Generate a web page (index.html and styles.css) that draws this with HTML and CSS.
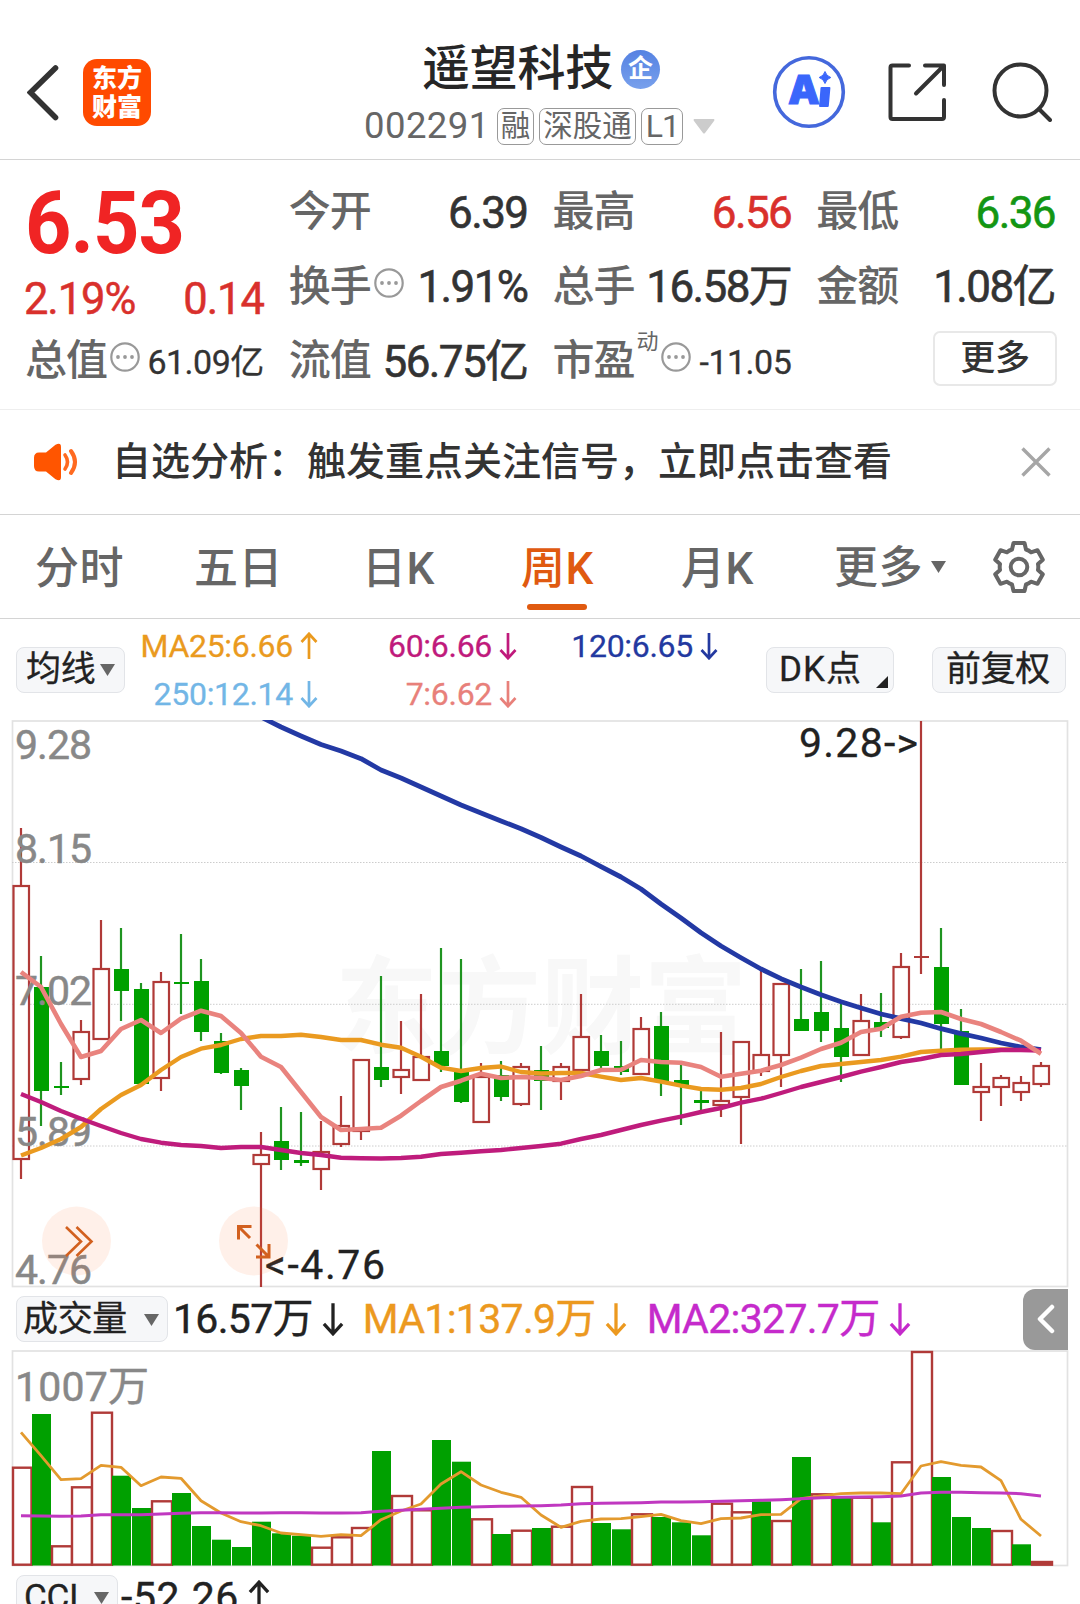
FILE: index.html
```html
<!DOCTYPE html>
<html lang="zh-CN">
<head>
<meta charset="utf-8">
<title>遥望科技 002291</title>
<link rel="stylesheet" href="styles.css">
</head>
<body>
<svg class="defs" width="0" height="0">
  <symbol id="more-dots" viewBox="0 0 30 30">
    <circle cx="15" cy="15" r="13.7" fill="none" stroke="#999" stroke-width="2.2"/>
    <circle cx="8" cy="15" r="1.9" fill="#999"/><circle cx="15" cy="15" r="1.9" fill="#999"/><circle cx="22" cy="15" r="1.9" fill="#999"/>
  </symbol>
  <symbol id="arrow-down" viewBox="0 0 18 28">
    <path d="M9 1V26M1.5 18L9 26.2L16.5 18" fill="none" stroke="currentColor" stroke-width="2.7"/>
  </symbol>
  <symbol id="arrow-up" viewBox="0 0 18 28">
    <path d="M9 27V2M1.5 10L9 1.8L16.5 10" fill="none" stroke="currentColor" stroke-width="2.7"/>
  </symbol>
  <symbol id="caret" viewBox="0 0 15 12"><path d="M0 0H15L7.5 12Z" fill="currentColor"/></symbol>
</svg>

<header class="header">
  <div class="header-left">
    <svg class="back" width="32" height="56" viewBox="0 0 32 56"><path d="M28.5 3L3.5 27.5L28.5 52.5" fill="none" stroke="#333" stroke-width="5.6" stroke-linecap="round" stroke-linejoin="miter"/></svg>
    <div class="logo"><span>东方</span><span>财富</span></div>
  </div>
  <div class="header-mid">
    <div class="title"><h1>遥望科技</h1><span class="ent">企</span></div>
    <div class="code"><span class="num">002291</span><span class="tag">融</span><span class="tag">深股通</span><span class="tag tag-l">L1</span><svg class="code-caret" width="22" height="15" viewBox="0 0 22 15"><path d="M1 0H21Q22 1 21 2L12 14Q11 15 10 14L1 2Q0 1 1 0Z" fill="#ccc"/></svg></div>
  </div>
  <div class="header-right">
    <svg width="74" height="74" viewBox="0 0 74 74">
      <circle cx="37" cy="37" r="34.3" fill="#fff" stroke="#4468dc" stroke-width="3.6"/>
      <text class="ai-a" x="16" y="49">A</text>
      <path d="M49.500 32H57.500Q58.500 32 58.400 33L56.800 51Q56.700 52 55.700 52H48Q47 52 47.100 51L48.500 33Q48.600 32 49.500 32Z" fill="#3a66fb"/>
      <path d="M53 16.500Q54.300 21 58.800 22.500Q54.300 24 53 28.500Q51.700 24 47.200 22.500Q51.700 21 53 16.500Z" fill="#3a66fb" stroke="#3a66fb"/>
    </svg>
    <svg class="share" width="60" height="60" viewBox="0 0 60 60" fill="none" stroke="#333" stroke-width="4" stroke-linecap="round" stroke-linejoin="round">
      <path d="M22 3.5H5.5Q3.5 3.5 3.5 5.5V55Q3.5 57 5.5 57H55Q57 57 57 55V38M38 3.5H57V23M56 4.500L29 31.500"/>
    </svg>
    <svg class="search" width="60" height="60" viewBox="0 0 60 60" fill="none" stroke="#333" stroke-width="4" stroke-linecap="round">
      <circle cx="28.500" cy="28.500" r="26"/><path d="M47 47L58 58"/>
    </svg>
  </div>
</header>

<section class="quote">
  <div class="price-block">
    <div class="price"><span>6.53</span></div>
    <div class="change"><span>2.19%</span><span>0.14</span></div>
  </div>
  <div class="cell"><label>今开</label><b>6.39</b></div>
  <div class="cell"><label>最高</label><b class="up">6.56</b></div>
  <div class="cell"><label>最低</label><b class="down">6.36</b></div>
  <div class="cell"><label>换手</label><svg class="dots"><use href="#more-dots"/></svg><b>1.91%</b></div>
  <div class="cell"><label>总手</label><b>16.58万</b></div>
  <div class="cell"><label>金额</label><b>1.08亿</b></div>
  <div class="cell"><label>总值</label><svg class="dots"><use href="#more-dots"/></svg><b class="small">61.09亿</b></div>
  <div class="cell"><label>流值</label><b>56.75亿</b></div>
  <div class="cell"><label>市盈</label><sup>动</sup><svg class="dots"><use href="#more-dots"/></svg><b class="small">-11.05</b></div>
  <div class="cell cell-more"><button class="more">更多</button></div>
</section>

<section class="notice">
  <svg class="speaker" width="46" height="38" viewBox="0 0 46 38">
    <path d="M6 9.500H13L22.500 1.800Q28 -1 28 4V34Q28 39 22.500 36.200L13 28.500H6Q1 28.500 1 23V15Q1 9.500 6 9.500Z" fill="#ff5500"/>
    <path d="M32 12Q37 19 32 26" fill="none" stroke="#ff6a20" stroke-width="3.600" stroke-linecap="round"/>
    <path d="M38 8Q46 19 38 30" fill="none" stroke="#ff6a20" stroke-width="4" stroke-linecap="round"/>
  </svg>
  <p>自选分析：触发重点关注信号，立即点击查看</p>
  <svg class="close" width="30" height="30" viewBox="0 0 30 30"><path d="M1.500 1.500L28.500 28.500M28.500 1.500L1.500 28.500" stroke="#a6a6a6" stroke-width="3.400"/></svg>
</section>

<nav class="tabs">
  <a>分时</a><a>五日</a><a>日K</a><a class="active">周K</a><a>月K</a>
  <a class="tab-more"><span>更多</span><svg width="15" height="12"><use href="#caret"/></svg></a>
  <svg class="gear" width="54" height="54" viewBox="-27 -27 54 54" fill="none" stroke="#666" stroke-width="4" stroke-linejoin="round">
    <path d="M-5.500 -24H5.500L7 -17.500Q10 -16.500 12 -14.700L18.500 -16.800L23.800 -7.300L19 -3Q19.600 0 19 3L23.800 7.300L18.500 16.800L12 14.700Q10 16.500 7 17.500L5.500 24H-5.500L-7 17.500Q-10 16.500 -12 14.700L-18.500 16.800L-23.800 7.300L-19 3Q-19.600 0 -19 -3L-23.800 -7.300L-18.500 -16.800L-12 -14.700Q-10 -16.500 -7 -17.500Z"/>
    <circle r="8.300"/>
  </svg>
</nav>

<section class="ma-bar">
  <button class="chip chip-ma">均线<svg width="15" height="12"><use href="#caret"/></svg></button>
  <div class="ma-col ma-1">
    <span class="c25">MA25:6.66<svg><use href="#arrow-up"/></svg></span>
    <span class="c250">250:12.14<svg><use href="#arrow-down"/></svg></span>
  </div>
  <div class="ma-col ma-2">
    <span class="c60">60:6.66<svg><use href="#arrow-down"/></svg></span>
    <span class="c7">7:6.62<svg><use href="#arrow-down"/></svg></span>
  </div>
  <div class="ma-col ma-3">
    <span class="c120">120:6.65<svg><use href="#arrow-down"/></svg></span>
  </div>
  <button class="chip chip-dk">DK点<svg width="12" height="12" viewBox="0 0 12 12"><path d="M12 0V12H0Z" fill="#222"/></svg></button>
  <button class="chip chip-adj">前复权</button>
</section>

<svg class="kline" id="kline" width="1080" height="568" viewBox="0 720 1080 568"></svg>

<section class="vol-bar">
  <button class="chip chip-vol">成交量<svg width="15" height="12"><use href="#caret"/></svg></button>
  <span class="v1">16.57万<svg><use href="#arrow-down"/></svg></span>
  <span class="v2">MA1:137.9万<svg><use href="#arrow-down"/></svg></span>
  <span class="v3">MA2:327.7万<svg><use href="#arrow-down"/></svg></span>
  <div class="drawer"><svg width="18" height="30" viewBox="0 0 18 30"><path d="M15 3L3 15L15 27" fill="none" stroke="#fff" stroke-width="4.500" stroke-linecap="round" stroke-linejoin="round"/></svg></div>
</section>

<svg class="volume" id="volume" width="1080" height="217" viewBox="0 -1 1080 217"></svg>

<section class="cci-bar">
  <button class="chip chip-cci">CCI<svg width="15" height="12"><use href="#caret"/></svg></button>
  <span class="v1">-52.26<svg><use href="#arrow-up"/></svg></span>
</section>
<script src="chart.js"></script>
</body>
</html>
```
FILE: styles.css
```css
* { box-sizing: border-box; }
body {
  margin: 0;
  width: 1080px;
  height: 1604px;
  overflow: hidden;
  background: #fff;
  color: #333;
  font-family: Roboto, "Noto Sans CJK SC", sans-serif;
  font-weight: 500;
  line-height: 1.2;
  letter-spacing: -.02em;
}
svg { display: block; flex: none; }
.defs { position: absolute; }
button { font: inherit; letter-spacing: inherit; color: #222; margin: 0; white-space: nowrap; }

.header {
  height: 160px;
  padding: 0 28px 0 27px;
  border-bottom: 1px solid #d4d4d4;
  display: grid;
  grid-template-columns: 1fr auto 1fr;
}
.header-left { display: flex; padding-top: 59px; gap: 24px; }
.back { margin-top: 6px; }
.logo {
  width: 68px;
  height: 67px;
  border-radius: 14px;
  background: #ff4a00;
  color: #fff;
  font-size: 25px;
  font-weight: 900;
  line-height: 29px;
  letter-spacing: 0;
  display: flex;
  flex-direction: column;
  align-items: center;
  justify-content: center;
}
.header-mid { display: flex; flex-direction: column; align-items: center; padding-top: 42px; }
.title { display: flex; align-items: center; gap: 8px; height: 54px; padding-left: 3px; }
h1 { margin: 0; font-size: 48px; font-weight: 500; line-height: 54px; color: #262626; letter-spacing: -.3px; }
.ent {
  width: 39px;
  height: 39px;
  border-radius: 50%;
  background: linear-gradient(#5582e2, #78a0ec);
  color: #fff;
  font-size: 25px;
  font-weight: 700;
  line-height: 38px;
  text-align: center;
}
.code { display: flex; align-items: center; height: 60px; color: #666; font-size: 36.5px; font-weight: 400; }
.code .num { margin-right: 7px; letter-spacing: .45px; }
.tag {
  height: 37px;
  padding: 0 3px;
  margin-right: 5px;
  border: 1.500px solid #999;
  border-radius: 7px;
  font-size: 29.5px;
  line-height: 34px;
  letter-spacing: 0;
}
.tag-l { padding: 0 3px 0 4px; font-size: 32px; letter-spacing: -1px; }
.code-caret { margin-left: 5px; }
.header-right { display: flex; justify-content: flex-end; padding-top: 55px; }
.share { margin: 7px 0 0 41px; }
.search { margin: 7px 0 0 45px; }
.ai-a { font: 900 40px Inter, sans-serif; fill: #3a66fb; stroke: #3a66fb; }

.quote {
  height: 250px;
  padding: 14px 25px 0;
  border-bottom: 1px solid #eee;
  display: grid;
  grid-template-columns: repeat(4, 1fr);
  grid-template-rows: repeat(3, 74.500px);
  column-gap: 25px;
}
.price-block { grid-row: span 2; color: #d9302c; }
.price { height: 92px; font-size: 88px; font-weight: 700; line-height: 98px; color: #f02424; }
.price span { display: inline-block; transform: scaleX(.92); transform-origin: left; letter-spacing: -1px; }
.change { display: flex; justify-content: space-between; font-size: 43.500px; font-weight: 400; -webkit-text-stroke: .5px; line-height: 67px; letter-spacing: -.025em; margin-left: -1px; }
.cell { display: flex; align-items: center; height: 74px; }
.cell label { font-size: 42px; color: #666; letter-spacing: -1px; padding-top: 3px; }
.cell b { margin-left: auto; font-size: 44px; font-weight: 400; -webkit-text-stroke: .6px; letter-spacing: -.036em; padding-top: 4px; }
.cell .small { font-size: 34px; letter-spacing: -.015em; -webkit-text-stroke: .3px; }
.cell .up { color: #d9302c; }
.cell .down { color: #139613; }
.cell sup { align-self: flex-start; font-size: 22px; font-weight: 400; line-height: 34px; color: #666; margin-left: 2px; padding-top: 2px; }
.dots { width: 30px; height: 30px; margin-left: 3px; margin-top: -6px; }
.cell-more { justify-content: flex-end; }
.more {
  width: 124px;
  height: 55px;
  border: 2px solid #e8e8e8;
  border-radius: 7px;
  background: #fff;
  font-size: 35px;
  line-height: 52px;
  padding: 0;
  margin: -3px -2px 0 0;
  color: #333;
}

.notice {
  height: 105px;
  padding: 0 29px 0 33px;
  border-bottom: 1px solid #d4d4d4;
  display: flex;
  align-items: center;
}
.speaker { margin-top: -1px; }
.notice p { margin: 0 auto 0 33px; font-size: 39px; letter-spacing: 0; }

.tabs {
  height: 104px;
  padding: 0 34px 0 35px;
  border-bottom: 1px solid #d4d4d4;
  display: grid;
  grid-template-columns: 159px 168px 159px 160px 153px auto 54px;
  align-items: center;
  justify-items: start;
  font-size: 44px;
  color: #666;
}
.tabs a { line-height: 109px; height: 103px; letter-spacing: .4px; }
.tabs .active { color: #e05a10; display: flex; flex-direction: column; align-items: center; }
.tabs .active::after { content: ""; width: 60px; height: 6px; flex: none; border-radius: 3px; background: #e05a10; margin-top: -20px; }
.tabs .tab-more { display: flex; align-items: center; gap: 8px; }
.tab-more span { padding-top: 4px; }

.ma-bar { height: 101px; padding-left: 16px; display: flex; align-items: flex-start; }
.chip {
  height: 46px;
  padding: 0 9px;
  border: 1.500px solid #e2e4e8;
  border-radius: 8px;
  background: #f6f7f9;
  font-size: 35px;
  font-weight: 400;
  -webkit-text-stroke: .3px;
  line-height: 42px;
  display: flex;
  align-items: center;
  flex: none;
}
.chip svg { color: #666; }
.ma-bar .chip { margin-top: 28px; }
.chip-ma { width: 109px; gap: 5px; }
.ma-col { display: flex; flex-direction: column; align-items: flex-end; font-size: 32px; font-weight: 400; -webkit-text-stroke: .3px; line-height: 48px; padding-top: 3px; letter-spacing: -.3px; }
.ma-col span { display: flex; align-items: center; gap: 7px; }
.ma-col svg { width: 18px; height: 28px; }
.ma-1 { width: 193px; }
.ma-2 { width: 199px; }
.ma-3 { width: 201px; }
.c25 { color: #ea9a1e; }
.c250 { color: #72b6e6; }
.c60 { color: #c01a7c; }
.c7 { color: #e8807a; }
.c120 { color: #2339a0; }
.chip-dk { width: 128px; margin-left: 48px; padding-left: 12px; padding-right: 5px; justify-content: space-between; letter-spacing: 1px; }
.chip-dk svg { margin-top: 24px; }
.chip-adj { width: 134px; margin-left: 38px; padding-left: 13px; }

.vol-bar, .cci-bar { display: flex; align-items: center; padding-left: 16px; font-size: 41px; font-weight: 400; color: #222; }
.vol-bar { height: 62px; }
.vol-bar > span, .cci-bar > span { display: flex; align-items: center; gap: 9px; letter-spacing: -.7px; -webkit-text-stroke: .4px; padding-top: 2px; }
.vol-bar > span svg, .cci-bar > span svg { width: 22px; height: 34px; margin-top: -2px; }
.chip-vol { width: 152px; padding: 2px 8px 0 6px; justify-content: space-between; }
.vol-bar .v1 { margin-left: 5px; }
.vol-bar .v2 { margin-left: 19px; color: #ec991f; }
.vol-bar .v3 { margin-left: 20px; color: #c52acb; }
.drawer {
  width: 45px;
  height: 61px;
  margin-left: auto;
  margin-right: 12px;
  border-radius: 12px 0 0 12px;
  background: #999;
  display: flex;
  align-items: center;
  justify-content: center;
}
.cci-bar { margin-top: 8px; height: 46px; }
.chip-cci { width: 102px; padding: 0 8px 0 7px; justify-content: space-between; }
.cci-bar .v1 { margin-left: 3px; letter-spacing: .6px; padding-top: 0; }

.axis { font-size: 41px; font-weight: 400; fill: #888; letter-spacing: 0; stroke: #888; stroke-width: .5px; }
.note { font-size: 41px; font-weight: 400; fill: #222; letter-spacing: 0; stroke: #222; stroke-width: .3px; }
.mark { font-size: 106px; font-weight: 700; fill: #f8f8f8; letter-spacing: 0; }
```
FILE: chart.js
```js
const NS = 'http://www.w3.org/2000/svg';
const RED = '#b03a38', GREEN = '#00a000', WICK = '#1f9420';
const cx = i => 21 + 20 * i;

function add(root, tag, attrs, text) {
  const el = document.createElementNS(NS, tag);
  for (const k in attrs) el.setAttribute(k, attrs[k]);
  if (text) el.textContent = text;
  root.appendChild(el);
}
function line(root, ys, color, width, start = 0) {
  add(root, 'polyline', {
    points: ys.map((y, i) => cx(i + start) + ',' + y).join(' '),
    fill: 'none', stroke: color, 'stroke-width': width, 'stroke-linejoin': 'round'
  });
}

/* direction, high, body top, body bottom, low */
const candles = [
  ['r',828,885,1160,1179],['g',956,987,1091,1126],['g',1062,1086,1088,1095],['r',1020,1031,1080,1085],
  ['r',920,968,1040,1040],['g',928,969,991,1021],['g',983,989,1084,1085],['r',972,981,1079,1091],
  ['g',934,982,984,1014],['g',959,981,1032,1041],['g',1033,1041,1073,1074],['g',1068,1070,1086,1110],
  ['r',1132,1154,1165,1287],['g',1107,1141,1160,1170],['g',1112,1160,1163,1166],['r',1121,1151,1170,1190],
  ['r',1096,1125,1145,1147],['r',1059,1059,1132,1140],['g',976,1067,1080,1087],['r',1021,1069,1078,1094],
  ['r',994,1056,1081,1081],['g',948,1051,1066,1072],['g',959,1072,1102,1103],['r',1063,1076,1123,1123],
  ['g',1061,1075,1097,1101],['r',1063,1066,1105,1106],['g',1046,1070,1081,1110],['r',1063,1066,1082,1100],
  ['r',994,1036,1071,1078],['g',1035,1051,1066,1068],['g',1041,1066,1072,1075],['r',1017,1028,1075,1075],
  ['g',1012,1026,1081,1096],['g',1063,1080,1085,1125],['g',1087,1100,1103,1110],['r',1032,1100,1106,1117],
  ['r',1041,1041,1098,1144],['r',970,1054,1072,1076],['r',983,983,1056,1087],['g',969,1019,1031,1031],
  ['g',961,1012,1031,1042],['g',1001,1028,1057,1082],['r',994,1020,1056,1056],['g',993,1022,1028,1037],
  ['r',953,966,1038,1039],['r',721,956,958,974],['g',928,967,1024,1049],['g',1009,1031,1085,1085],
  ['r',1063,1086,1093,1121],['r',1075,1077,1088,1106],['r',1076,1082,1093,1101],['r',1062,1065,1085,1087]
];
const ma25 = [1155.5,1148,1139,1127,1109,1095,1085,1070,1057,1048.7,1045,1039,1036,1036,1034.7,1037,1040,1040,1044.7,1047.7,1056.7,1067.7,1071,1068,1066.5,1072,1073.5,1073,1073,1076.7,1080,1078,1081.7,1085.7,1089,1089.7,1088,1084,1077,1071,1066,1064,1062,1060,1056.7,1052,1050.7,1049.7,1049.5,1049.5,1049.5,1050];
const ma60 = [1094,1102,1111,1118.7,1126,1133,1139,1142.7,1145,1146,1148,1147,1147,1150,1153,1155,1157.7,1158.2,1158.5,1158,1156.7,1154,1152.7,1151.3,1150,1148,1146,1143.7,1139,1135,1130,1125,1120.7,1116.7,1112,1108,1102.7,1098.7,1093,1087,1082,1077,1071.7,1067,1062,1059,1055,1054,1052,1050,1050,1050.5];
const ma7 = [972,987,1024,1057,1051,1029,1020,1033,1018.7,1010.7,1016,1033,1056.7,1067,1092,1117,1130,1129,1127.7,1115.7,1101,1087,1080.7,1073.7,1078,1077,1078,1080,1076,1070,1069.7,1060,1062,1062.7,1067,1076.7,1073.7,1070.7,1065,1057.7,1049,1042.7,1032,1028.7,1016.7,1012.7,1012,1019,1024,1032,1040.7,1053.7];
const ma120 = [717,727,736,744.5,751,758.7,770,778,787,796,805,813,821,828.7,837.5,847,856,866.7,877,889,904,918,932.7,946,957.7,969,978.7,987,994.7,1001.7,1008,1014,1018.7,1023,1028.7,1033.7,1038,1043,1047,1049.7];

const k = document.getElementById('kline');
add(k, 'text', { x: 335, y: 1045, class: 'mark', textLength: 412, lengthAdjust: 'spacingAndGlyphs' }, '东方财富');
add(k, 'rect', { x: 12.5, y: 721, width: 1055, height: 565.5, fill: 'none', stroke: '#e2e2e2', 'stroke-width': 1.7 });
for (const y of [862.5, 1004.3, 1146])
  add(k, 'path', { d: `M12 ${y}H1067`, stroke: '#ccc', 'stroke-width': 1, 'stroke-dasharray': '1.5 1.5' });
candles.forEach(([d, hi, top, bot, lo], i) => {
  const x = cx(i);
  if (d === 'g') {
    add(k, 'path', { d: `M${x} ${hi}V${lo}`, stroke: WICK, 'stroke-width': 2.2 });
    add(k, 'rect', { x: x - 7, y: top, width: 15, height: bot - top, fill: GREEN });
  } else if (bot - top < 3) {
    add(k, 'path', { d: `M${x} ${hi}V${lo}M${x - 7} ${(top + bot) / 2}H${x + 8}`, stroke: RED, 'stroke-width': 2.2 });
  } else {
    add(k, 'path', { d: `M${x} ${hi}V${top}M${x} ${bot}V${lo}`, stroke: RED, 'stroke-width': 2.2 });
    add(k, 'rect', { x: x - 7.5, y: top + 1, width: 15.5, height: bot - top - 2, fill: '#fff', stroke: RED, 'stroke-width': 2.2 });
  }
});
[[9.28, 759], [8.15, 863], [7.02, 1005], [5.89, 1146], [4.76, 1284]].forEach(([v, y]) =>
  add(k, 'text', { x: 15, y, class: 'axis', textLength: 77 }, v));
line(k, ma25, '#ea9a20', 4.4);
line(k, ma120, '#2339a4', 4.8, 12);
line(k, ma60, '#bf1c7c', 4.4);
line(k, ma7, '#e9837e', 4.6);
add(k, 'text', { x: 799, y: 757, class: 'note', textLength: 119 }, '9.28->');
add(k, 'text', { x: 265, y: 1279, class: 'note', textLength: 120 }, '<-4.76');
for (const x of [76.5, 253.5])
  add(k, 'circle', { cx: x, cy: 1241, r: 34.5, fill: 'rgba(255,110,40,.1)' });
add(k, 'path', { d: 'M66 1227L81 1241.500L66 1256M76.500 1227L91.500 1241.500L76.500 1256', fill: 'none', stroke: '#d2601f', 'stroke-width': 2.6 });
add(k, 'path', { d: 'M251.500 1226.500H238.500V1239.500M239 1227L250 1238M269 1244V1257H256M268.500 1256.500L256.500 1244.500', fill: 'none', stroke: '#d2601f', 'stroke-width': 3 });

/* volume: direction and bar top */
const bars = 'r115.7 g63 r194.3 r135.3 r60.7 g124.7 g157 r149.3 g142 g175 g188.7 g196 g170.7 g182.3 g184.7 r195.7 r185.3 r176 g100 r144 r158.3 g89 g110.7 r167.3 g183 r178.7 g177 r174.7 r135 g172 g178.3 r162.3 g166 g171.3 g184.3 r151.7 r160.3 g150.3 r169 g106 r142.3 g145.7 r145.7 g171.3 r110.3 r0 g126 g166 g177 r179 g193.3 r210'.split(' ');
const vma1 = [81.3,104.7,128.7,127.7,114.3,116.3,134.7,126,127.3,149.7,162,170.7,174.7,182,183.7,185.3,183.7,184.7,168.7,160,153,133,120.7,134,141.3,146.3,164,176.3,170.3,168,167.7,165.7,163.3,169.7,172.7,167.7,167,163.7,163.3,147.7,145,142.7,142,142,142.7,115,110.7,114.3,116,129.7,168.3,185];
const vma2 = [164.7,165,165.3,165,163.7,163.7,163.7,163,162.3,161.7,161.7,162,162,161.7,161.7,162,162,161.7,160.3,159.3,158.3,157.3,156.3,155.7,155.3,155,154.7,154,152.7,152.3,152,151.7,151,151,150.7,150.3,149.7,149.3,148.7,147.7,146.7,146.3,146,145.7,145,142,141.3,141.3,141.7,142,142.7,145];
const v = document.getElementById('volume');
add(v, 'rect', { x: 12.5, y: 0, width: 1055, height: 214.5, fill: 'none', stroke: '#e2e2e2', 'stroke-width': 1.7 });
bars.forEach((b, i) => {
  const top = +b.slice(1), x = 12 + 20 * i;
  if (b[0] === 'g') add(v, 'rect', { x, y: top, width: 19, height: 214.5 - top, fill: GREEN });
  else add(v, 'rect', { x: x + (i ? 0 : 1), y: top + 1, width: i ? 20 : 18.5, height: Math.max(2.5, 212.7 - top), fill: top > 205 ? RED : '#fff', stroke: RED, 'stroke-width': 2.4 });
});
line(v, vma1, '#e39a2e', 2.8);
line(v, vma2, '#c038c0', 3);
add(v, 'text', { x: 15, y: 50, class: 'axis', textLength: 134 }, '1007万');
```
